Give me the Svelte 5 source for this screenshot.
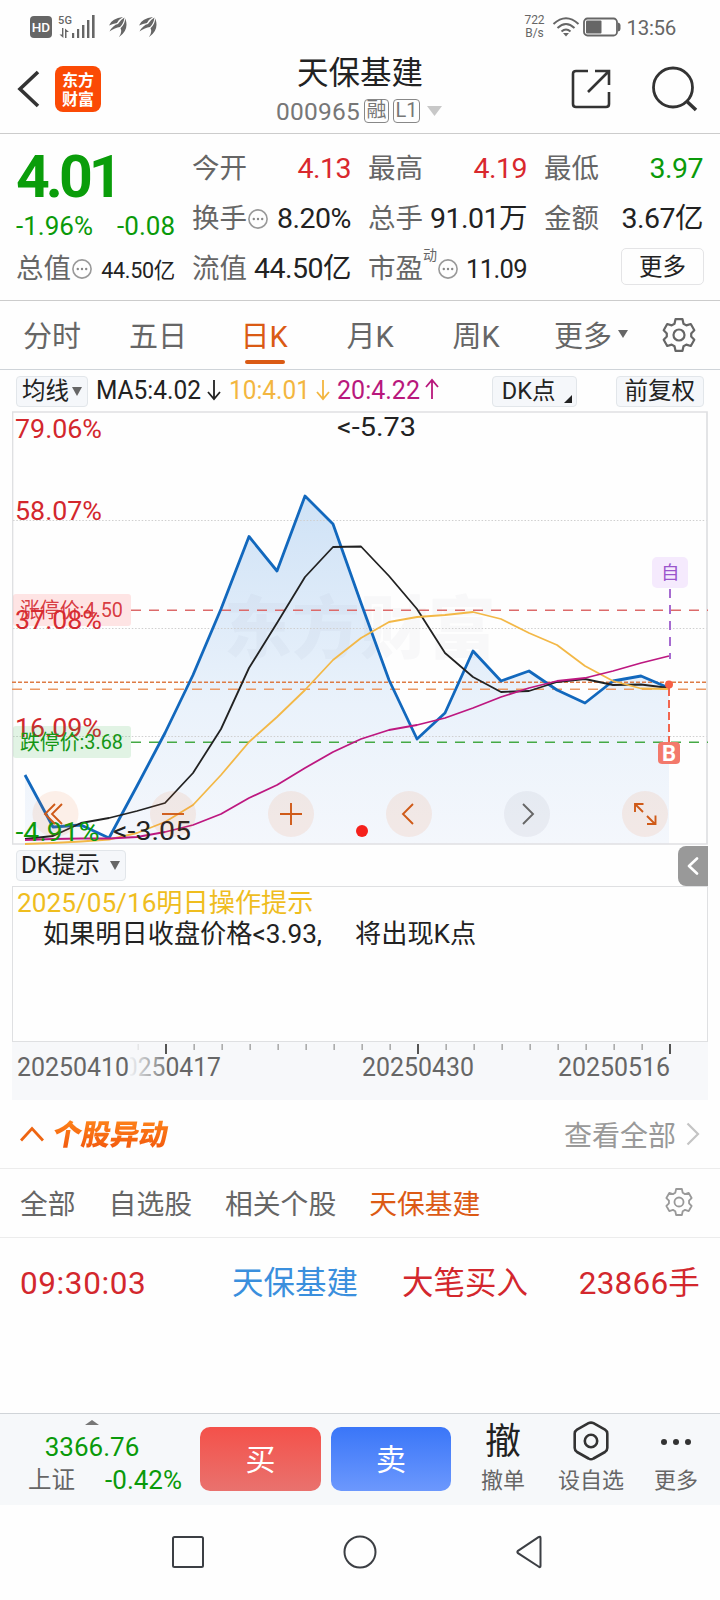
<script lang="ts">
	// Candles are spaced evenly along the x axis
	const x0 = 25;
	const step = 28;

	const price = [775, 827, 825, 838, 786, 733, 675, 609, 536.5, 571, 496, 524, 603, 680, 739, 713, 651, 681, 671, 690, 703, 681, 676, 688];
	const ma5 = [839, 836, 823, 818, 811, 803, 773, 729, 668, 623, 577, 547, 546.5, 576, 609, 653, 677, 692, 691, 682, 679, 685, 684.5, 688];
	const ma10 = [844, 843, 841.5, 839.5, 833, 822, 805, 775, 742, 717, 690, 660, 638, 622, 617, 615, 612, 619, 633, 645, 666, 681, 688.5, 689];
	const ma20 = [840, 839, 838.5, 838.5, 837, 832, 825, 814, 798, 785, 768, 752, 739, 730, 725, 718, 708, 697, 688, 681, 678, 671, 663, 656];

	const toPoints = (ys: number[]) => ys.map((y, i) => `${x0 + i * step},${y}`).join(' ');
	const area = `${x0},844 ${toPoints(price)} ${x0 + 23 * step},844`;

	const scale = [
		{ label: '79.06%', y: 438 },
		{ label: '58.07%', y: 520 },
		{ label: '37.08%', y: 629 },
		{ label: '16.09%', y: 737 }
	];

	const ticks = Array.from({ length: 20 }, (_, i) => 138 + i * 28);
	const majorTicks = [166, 418, 670];

	const tabs = ['分时', '五日', '日K', '月K', '周K'];
	const filters = ['全部', '自选股', '相关个股', '天保基建'];

	let activeTab = $state('日K');
	let activeFilter = $state('天保基建');
</script>

{#snippet more()}
	<svg class="info" width="20" height="20" viewBox="0 0 20 20">
		<circle cx="10" cy="10" r="9.1" fill="none" stroke="#999" stroke-width="1.6" />
		<circle cx="5.8" cy="10" r="1.2" fill="#888" />
		<circle cx="10" cy="10" r="1.2" fill="#888" />
		<circle cx="14.2" cy="10" r="1.2" fill="#888" />
	</svg>
{/snippet}

{#snippet gear(size: number, color: string, weight: number)}
	<svg width={size} height={size} viewBox="0 0 34 34" fill="none" stroke={color} stroke-width={weight} stroke-linejoin="round">
		<path d="M13.5 1.2 H20.5 L21.5 5.8 L24.3 7.4 L28.8 6 L32.3 12.2 L29.2 15.4 V18.6 L32.3 21.8 L28.8 28 L24.3 26.6 L21.5 28.2 L20.5 32.8 H13.5 L12.5 28.2 L9.7 26.6 L5.2 28 L1.7 21.8 L4.8 18.6 V15.4 L1.7 12.2 L5.2 6 L9.7 7.4 L12.5 5.8 Z" />
		<circle cx="17" cy="17" r="5.5" />
	</svg>
{/snippet}

{#snippet wing()}
	<svg width="18" height="20" viewBox="0 0 18 20" fill="#666">
		<path d="M0 8.5 Q3 1 14 0 Q9.5 2.5 8 6 Q4 6.5 0 8.5 Z" />
		<path d="M.5 14.5 Q4 8 9 7 Q11 3 15.5 .5 Q14.5 7 11 10 Q6 10.5 .5 14.5 Z" />
		<path d="M10 20 Q13.5 15 11.5 11.2 Q15.5 8 16.3 1.5 Q20.5 13 10 20 Z" />
	</svg>
{/snippet}

<div class="screen">
	<div class="status">
		<div class="status-left">
			<span class="hd">HD</span>
			<svg class="signal" width="38" height="26" viewBox="0 0 38 26" fill="#666">
				<text x="0" y="10" font-size="11" font-weight="500" textLength="14">5G</text>
				<path d="M4 14 h1.4 v10 L1.5 20.5 h2.5 Z M7 24 V14.5 L11 18 H8.5 V24 Z" />
				<rect x="14" y="19" width="2.2" height="5" />
				<rect x="19" y="15" width="2.2" height="9" />
				<rect x="24" y="11" width="2.4" height="13" />
				<rect x="29" y="6" width="2.4" height="18" />
				<rect x="34" y="1" width="2.6" height="23" />
			</svg>
			{@render wing()}
			<span class="wing-gap"></span>
			{@render wing()}
		</div>
		<div class="status-right">
			<span class="speed">722<br />B/s</span>
			<svg width="28" height="20" viewBox="0 0 28 20" fill="none" stroke="#666" stroke-width="2">
				<path d="M1.5 7 Q14 -4.5 26.5 7" />
				<path d="M5.5 11 Q14 3 22.5 11" />
				<path d="M9.5 14.5 Q14 10.5 18.5 14.5" />
				<path d="M11 16 H17 L14 19.5 Z" fill="#666" stroke="none" />
			</svg>
			<svg class="battery" width="38" height="20" viewBox="0 0 38 20">
				<rect x="1" y="1.5" width="33" height="17" rx="3.5" fill="none" stroke="#666" stroke-width="1.8" />
				<rect x="3" y="3.5" width="15.5" height="13" rx="1" fill="#666" />
				<path d="M35 5.5 Q37.5 6 37.5 8 V12 Q37.5 14 35 14.5 Z" fill="#666" />
			</svg>
			<span class="clock">13:56</span>
		</div>
	</div>

	<header>
		<div class="head-left">
			<svg width="24" height="38" viewBox="0 0 24 38" fill="none" stroke="#333" stroke-width="3.6">
				<path d="M21 2 L3 19 L21 36" />
			</svg>
			<div class="logo"><span>东方</span><span>财富</span></div>
		</div>
		<div class="title">
			<h1>天保基建</h1>
			<div class="code">
				<span>000965</span>
				<i class="tag">融</i>
				<i class="tag l1">L1</i>
				<svg width="15" height="10" viewBox="0 0 15 10"><path d="M0 0 H15 L7.5 10 Z" fill="#c8c8c8" /></svg>
			</div>
		</div>
		<div class="head-right">
			<svg width="40" height="40" viewBox="0 0 40 40" fill="none" stroke="#333" stroke-width="2.6">
				<path d="M17 2 H5 Q2 2 2 5 V35 Q2 38 5 38 H35 Q38 38 38 35 V23" />
				<path d="M24 2 H38 V16 M38 2 L17 23" />
			</svg>
			<svg width="46" height="46" viewBox="0 0 46 46" fill="none" stroke="#333" stroke-width="2.8">
				<circle cx="21" cy="21.5" r="19.5" />
				<path d="M34.5 35 L44 44" stroke-width="3.5" />
			</svg>
		</div>
	</header>

	<section class="quote">
		<div class="main-quote">
			<div class="price">4.01</div>
			<div class="change"><span>-1.96%</span><span>-0.08</span></div>
			<div class="cell small"><label>总值{@render more()}</label><b>44.50亿</b></div>
		</div>
		<div class="grid">
			<div class="cell"><label>今开</label><b class="up">4.13</b></div>
			<div class="cell"><label>最高</label><b class="up">4.19</b></div>
			<div class="cell"><label>最低</label><b class="down">3.97</b></div>
			<div class="cell"><label>换手{@render more()}</label><b>8.20%</b></div>
			<div class="cell"><label>总手</label><b>91.01万</b></div>
			<div class="cell"><label>金额</label><b>3.67亿</b></div>
			<div class="cell"><label>流值</label><b>44.50亿</b></div>
			<div class="cell pe"><label>市盈<sup>动</sup>{@render more()}</label><b>11.09</b></div>
			<div class="cell end"><button class="more-btn">更多</button></div>
		</div>
	</section>

	<nav class="tabs">
		{#each tabs as tab}
			<button class:active={tab === activeTab} onclick={() => (activeTab = tab)}>{tab}</button>
		{/each}
		<button class="tab-more">更多<svg width="10" height="8" viewBox="0 0 10 8"><path d="M0 0 H10 L5 8 Z" fill="#666" /></svg></button>
		{@render gear(34, '#666', 2.2)}
	</nav>

	<div class="ma-row">
		<button class="chip avg">均线<svg width="10" height="9" viewBox="0 0 10 9"><path d="M0 0 H10 L5 9 Z" fill="#666" /></svg></button>
		<svg class="ma-values" width="350" height="30" viewBox="96 376 350 30" font-size="25">
			<g fill="#222" stroke="none">
				<text x="96" y="399" textLength="105" lengthAdjust="spacingAndGlyphs">MA5:4.02</text>
				<path d="M214 380 V398 M208 392 L214 399 L220 392" fill="none" stroke="#222" stroke-width="1.8" />
			</g>
			<g fill="#f3b63f">
				<text x="229" y="399" textLength="81" lengthAdjust="spacingAndGlyphs">10:4.01</text>
				<path d="M323 380 V398 M317 392 L323 399 L329 392" fill="none" stroke="#f3b63f" stroke-width="1.8" />
			</g>
			<g fill="#b8187c">
				<text x="337" y="399" textLength="83" lengthAdjust="spacingAndGlyphs">20:4.22</text>
				<path d="M432 399 V381 M426 387 L432 380 L438 387" fill="none" stroke="#b8187c" stroke-width="1.8" />
			</g>
		</svg>
		<button class="chip dk">DK点<svg width="8" height="8" viewBox="0 0 8 8"><path d="M8 0 V8 H0 Z" fill="#222" /></svg></button>
		<button class="chip">前复权</button>
	</div>

	<svg class="chart" width="696" height="434" viewBox="12 411 696 434">
		<defs>
			<linearGradient id="fill" x1="0" y1="496" x2="0" y2="844" gradientUnits="userSpaceOnUse">
				<stop offset="0" stop-color="#cfe2f6" />
				<stop offset="0.6" stop-color="#eaf2fb" />
				<stop offset="1" stop-color="#f4f7fc" />
			</linearGradient>
		</defs>
		<polygon points={area} fill="url(#fill)" />
		<text class="watermark" x="224" y="653" textLength="272">东方财富</text>

		<g stroke="#cfcfcf" stroke-dasharray="1.5 1.8">
			<path d="M13 520.5 H707" />
			<path d="M13 628.5 H707" />
			<path d="M13 736.5 H707" />
		</g>
		<path d="M12.5 412 H707 V844 H12.5 Z" fill="none" stroke="#dfe0e2" stroke-width="1.7" />

		<path d="M131 610.3 H708" stroke="#dc6a6a" stroke-width="1.4" stroke-dasharray="10 8" />
		<path d="M131 742.3 H708" stroke="#45a945" stroke-width="1.4" stroke-dasharray="10 8" />
		<path d="M12 682.3 H707" stroke="#dd7b45" stroke-width="1.5" stroke-dasharray="4 2" />
		<path d="M12 689.3 H707" stroke="#eb9a66" stroke-width="1.5" stroke-dasharray="10 8" />

		<g fill="none" stroke-linejoin="round">
			<polyline points={toPoints(price)} stroke="#1268bd" stroke-width="2.8" />
			<polyline points={toPoints(ma5)} stroke="#222" stroke-width="1.8" />
			<polyline points={toPoints(ma10)} stroke="#f3b847" stroke-width="1.8" />
			<polyline points={toPoints(ma20)} stroke="#bd1880" stroke-width="1.8" />
		</g>

		<g font-size="26" fill="#d3272d">
			{#each scale as s}
				<text x="15" y={s.y} textLength="87" lengthAdjust="spacingAndGlyphs">{s.label}</text>
			{/each}
			<text x="15.5" y="841" fill="#0a9a0a" textLength="84" lengthAdjust="spacingAndGlyphs">-4.91%</text>
		</g>

		<rect x="13" y="594" width="118" height="32" rx="3" fill="#ff5050" fill-opacity="0.15" />
		<text x="20" y="617" font-size="21" fill="#d3272d" fill-opacity="0.9" textLength="103" lengthAdjust="spacingAndGlyphs">涨停价:4.50</text>
		<rect x="13" y="726" width="118" height="32" rx="3" fill="#22aa33" fill-opacity="0.13" />
		<text x="20" y="749" font-size="21" fill="#159615" textLength="103" lengthAdjust="spacingAndGlyphs">跌停价:3.68</text>

		<g font-size="26" fill="#222">
			<text x="337" y="436" textLength="79" lengthAdjust="spacingAndGlyphs">&lt;-5.73</text>
			<text x="113" y="840" textLength="78" lengthAdjust="spacingAndGlyphs">&lt;-3.05</text>
		</g>

		<path d="M670 589 V659" stroke="#a66bd0" stroke-width="2" stroke-dasharray="9 7" />
		<rect x="652" y="557" width="36" height="31" rx="5" fill="#f5eafd" />
		<text x="661" y="579" font-size="18.5" fill="#9a55cc">自</text>
		<path d="M669 688 V742" stroke="#f2664f" stroke-width="2" stroke-dasharray="8 4" />
		<circle cx="669" cy="684.5" r="4" fill="#f75f45" />
		<rect x="658" y="742" width="22" height="22" rx="4" fill="#f3796b" />
		<text x="669" y="761" font-size="22" font-weight="700" fill="#fff" text-anchor="middle">B</text>

		<!-- chart controls -->
		<g fill="#ea6a2a" fill-opacity="0.1">
			<circle cx="55.5" cy="814" r="23" />
			<circle cx="173" cy="814" r="23" />
			<circle cx="291" cy="814" r="23" />
			<circle cx="409" cy="814" r="23" />
			<circle cx="527" cy="814" r="23" fill="#889" />
			<circle cx="645" cy="814" r="23" />
		</g>
		<g fill="none" stroke="#cf5a18" stroke-width="1.9">
			<path d="M55 804 L45 814 L55 824 M62 804 L52 814 L62 824" />
			<path d="M162 814 H184" />
			<path d="M280 814 H302 M291 803 V825" />
			<path d="M413 804 L403 814 L413 824" />
			<path d="M523 804 L533 814 L523 824" stroke="#666" />
			<path d="M635 812 V804 H643.5 M635 804 L643 812 M647 824 H655.5 V815.5 M655 824 L647 816" />
		</g>
		<circle cx="362" cy="831" r="6" fill="#f5201b" />
	</svg>

	<div class="hint-bar">
		<button class="chip">DK提示<svg class="gap" width="10" height="9" viewBox="0 0 10 9"><path d="M0 0 H10 L5 9 Z" fill="#666" /></svg></button>
		<div class="drawer">
			<svg width="12" height="18" viewBox="0 0 12 18" fill="none" stroke="#fff" stroke-width="2.6" stroke-linecap="round" stroke-linejoin="round">
				<path d="M10 1.5 L2 9 L10 16.5" />
			</svg>
		</div>
	</div>

	<section class="hint">
		<p class="hint-title">2025/05/16明日操作提示</p>
		<p class="hint-text"><span>如果明日收盘价格&lt;3.93,</span><span>将出现K点</span></p>
	</section>

	<svg class="axis" width="696" height="58" viewBox="12 1042 696 58" font-size="25" fill="#666">
		<defs>
			<linearGradient id="fade" x1="128" x2="172" y1="0" y2="0" gradientUnits="userSpaceOnUse">
				<stop offset="0" stop-color="#f7f8fa" />
				<stop offset="1" stop-color="#f7f8fa" stop-opacity="0" />
			</linearGradient>
		</defs>
		<rect x="12" y="1042" width="696" height="58" fill="#f7f8fa" />
		{#each ticks as t}
			{#if majorTicks.includes(t)}
				<rect x={t - 1} y="1044" width="2" height="10" fill="#555" />
			{:else}
				<rect x={t - 0.5} y="1044" width="1.3" height="6" fill="#999" />
			{/if}
		{/each}
		<text x="110" y="1076" textLength="111" lengthAdjust="spacingAndGlyphs">20250417</text>
		<rect x="110" y="1044" width="20" height="40" fill="#f7f8fa" />
		<rect x="129" y="1044" width="36" height="40" fill="url(#fade)" />
		<text x="17" y="1076" textLength="112" lengthAdjust="spacingAndGlyphs">20250410</text>
		<text x="362" y="1076" textLength="112" lengthAdjust="spacingAndGlyphs">20250430</text>
		<text x="558" y="1076" textLength="112" lengthAdjust="spacingAndGlyphs">20250516</text>
	</svg>

	<section class="moves-head">
		<svg width="24" height="16" viewBox="0 0 24 16" fill="none" stroke="#ee6512" stroke-width="2.8">
			<path d="M1 14.5 L12 2.5 L23 14.5" />
		</svg>
		<h2>个股异动</h2>
		<span class="see-all">查看全部</span>
		<svg width="14" height="24" viewBox="0 0 14 24" fill="none" stroke="#c4c4c4" stroke-width="2.2">
			<path d="M1.5 1.5 L12 12 L1.5 22.5" />
		</svg>
	</section>

	<div class="filters">
		{#each filters as filter}
			<button class:active={filter === activeFilter} onclick={() => (activeFilter = filter)}>{filter}</button>
		{/each}
		{@render gear(28, '#999', 2.2)}
	</div>

	<div class="move">
		<span class="time">09:30:03</span>
		<span class="name">天保基建</span>
		<span class="kind">大笔买入</span>
		<span class="amount">23866手</span>
	</div>

	<footer>
		<div class="index">
			<svg width="14" height="5" viewBox="0 0 14 5"><path d="M0 5 L7 0 L14 5 Z" fill="#777" /></svg>
			<b>3366.76</b>
			<div><span>上证</span><em>-0.42%</em></div>
		</div>
		<button class="buy">买</button>
		<button class="sell">卖</button>
		<div class="actions">
			<div class="action"><span class="glyph">撤</span>撤单</div>
			<div class="action">
				<svg width="36" height="40" viewBox="0 0 36 40" fill="none" stroke="#333" stroke-width="2.6" stroke-linejoin="round">
					<path d="M15.5 2.2 Q18 1 20.5 2.2 L32 8.6 Q34.3 10 34.3 12.5 V27 Q34.3 29.5 32 31 L20.5 37.5 Q18 39 15.5 37.5 L4 31 Q1.7 29.5 1.7 27 V12.5 Q1.7 10 4 8.6 Z" />
					<circle cx="18" cy="20" r="6.2" />
				</svg>
				设自选
			</div>
			<div class="action">
				<svg width="32" height="40" viewBox="0 0 32 40" fill="#333">
					<circle cx="4" cy="21" r="3" />
					<circle cx="16" cy="21" r="3" />
					<circle cx="28" cy="21" r="3" />
				</svg>
				更多
			</div>
		</div>
	</footer>

	<div class="sysnav">
		<svg width="32" height="32" viewBox="0 0 32 32"><rect x="1" y="1" width="30" height="30" rx="1.5" /></svg>
		<svg width="34" height="34" viewBox="0 0 34 34"><circle cx="17" cy="17" r="15.5" /></svg>
		<svg width="26" height="34" viewBox="0 0 26 34"><path d="M24.5 3 V31 Q24.5 33 22.5 31.5 L2 18.2 Q0.8 17 2 15.8 L22.5 2.2 Q24.5 1 24.5 3 Z" /></svg>
	</div>
</div>

<style>
	:global(body) {
		background: #fefefe;
	}

	.screen {
		width: 720px;
		height: 1600px;
		overflow: hidden;
		display: flex;
		flex-direction: column;
		font-family: Roboto, 'Noto Sans CJK SC', sans-serif;
		color: #222;
		background: #fefefe;
	}

	.screen > * {
		flex-shrink: 0;
		box-sizing: border-box;
	}

	button {
		font: inherit;
		color: inherit;
		background: none;
		border: 0;
		padding: 0;
	}

	svg {
		display: block;
		flex-shrink: 0;
	}

	i, em, b {
		font-style: normal;
		font-weight: 400;
	}

	.status {
		height: 54px;
		display: flex;
		align-items: center;
		justify-content: space-between;
		padding: 0 44px 0 30px;
		color: #666;
	}

	.status-left, .status-right {
		display: flex;
		align-items: center;
	}

	.hd {
		width: 22px;
		height: 22px;
		border-radius: 4px;
		background: #666;
		color: #fff;
		font: 500 13.5px/22px Roboto, sans-serif;
		text-align: center;
	}

	.signal {
		margin: 0 13px 0 6px;
	}

	.wing-gap {
		width: 12px;
	}

	.speed {
		font-size: 12px;
		line-height: 13px;
		text-align: center;
		letter-spacing: -0.1px;
		margin-right: 8px;
	}

	.battery {
		margin: 0 5px 0 3px;
	}

	.clock {
		font-size: 20.5px;
		letter-spacing: -0.3px;
		line-height: 22px;
		padding-top: 2px;
	}

	header {
		height: 80px;
		border-bottom: 1px solid #ccc;
		display: flex;
		justify-content: space-between;
		position: relative;
		padding: 0 22px 0 17px;
	}

	.head-left {
		display: flex;
		align-items: center;
		gap: 14px;
		padding-bottom: 9px;
	}

	.logo {
		width: 46px;
		height: 46px;
		border-radius: 8px;
		background: #fb4a05;
		color: #fff;
		display: flex;
		flex-direction: column;
		align-items: center;
		justify-content: center;
		font: 700 16px/19px 'Noto Sans CJK SC', sans-serif;
	}

	.title {
		position: absolute;
		left: 0;
		right: 0;
		top: 2px;
		text-align: center;
	}

	h1 {
		margin: 0;
		font-size: 31.5px;
		font-weight: 400;
		line-height: 36px;
	}

	.code {
		display: flex;
		justify-content: center;
		align-items: center;
		gap: 4px;
		margin-top: 6px;
		height: 26px;
		color: #777;
		font-size: 24.5px;
		letter-spacing: 0.2px;
		padding-right: 2px;
	}

	.tag {
		width: 25px;
		height: 24px;
		box-sizing: border-box;
		border: 1px solid #888;
		border-radius: 4px;
		font-size: 20px;
		line-height: 21px;
		letter-spacing: 0;
	}

	.l1 {
		width: 27px;
	}

	.code svg {
		margin-left: 3px;
	}

	.head-right {
		display: flex;
		align-items: center;
		gap: 41px;
		padding-bottom: 9px;
	}

	.quote {
		height: 167px;
		border-bottom: 1px solid #ccc;
		padding: 9px 16px 0 16px;
		display: flex;
		gap: 18px;
	}

	.main-quote {
		width: 159px;
	}

	.price {
		height: 59px;
		font-size: 59px;
		line-height: 67px;
		font-weight: 700;
		letter-spacing: -4px;
		color: #0a9d0a;
	}

	.change {
		display: flex;
		justify-content: space-between;
		height: 41px;
		line-height: 49px;
		font-size: 26px;
		color: #0a9a0a;
	}

	.grid {
		display: grid;
		grid-template-columns: repeat(3, 158px);
		grid-auto-rows: 50px;
		column-gap: 18px;
	}

	.cell {
		display: flex;
		justify-content: space-between;
		align-items: baseline;
		height: 50px;
		line-height: 51px;
		white-space: nowrap;
	}

	.cell label {
		display: flex;
		align-items: center;
		font-size: 27.5px;
		color: #666;
	}

	.grid label {
		margin-left: -1px;
	}

	.cell b {
		font-size: 28.5px;
		letter-spacing: -0.5px;
	}

	.cell.small b {
		font-size: 21.5px;
		letter-spacing: -0.3px;
	}

	.cell.pe b {
		font-size: 25.5px;
		letter-spacing: -0.6px;
	}

	.cell .up {
		color: #d9282d;
	}

	.cell .down {
		color: #0a9a0a;
	}

	.info {
		margin-left: 1px;
	}

	sup {
		font-size: 14px;
		line-height: 14px;
		align-self: flex-start;
		margin-top: 5px;
	}

	.end {
		justify-content: flex-end;
		align-items: center;
	}

	.more-btn {
		width: 83px;
		height: 37px;
		margin: -3px -1px 0 0;
		border: 1.5px solid #e4e4e6;
		border-radius: 5px;
		font-size: 23.5px;
		line-height: 32px;
	}

	.tabs {
		height: 69px;
		border-bottom: 1px solid #cfd4d9;
		display: flex;
		align-items: center;
		padding: 0 24px 0 22px;
		font-size: 29px;
		color: #666;
	}

	.tabs button {
		height: 68px;
		padding-bottom: 2px;
		width: 60px;
		margin-right: 46px;
		white-space: nowrap;
		position: relative;
	}

	.tabs .active {
		color: #da5a14;
	}

	.tabs .active::after {
		content: '';
		position: absolute;
		left: 11px;
		bottom: 5px;
		width: 40px;
		height: 4px;
		border-radius: 2px;
		background: #da5a14;
	}

	.tabs .tab-more {
		width: 75px;
		margin: 0 auto 0 2px;
		display: flex;
		align-items: center;
		gap: 6px;
	}

	.ma-row {
		height: 41px;
		padding: 6px 16px 0;
		display: flex;
		align-items: flex-start;
	}

	.chip {
		box-sizing: border-box;
		height: 31px;
		border: 1.5px solid #e2e6ea;
		border-radius: 4px;
		background: #f5f7fa;
		font-size: 23.5px;
		line-height: 27px;
		padding: 0 8px;
		display: flex;
		align-items: center;
		white-space: nowrap;
	}

	.avg {
		padding: 0 5px;
		gap: 3px;
		margin-right: 8px;
	}

	.dk {
		margin-left: auto;
		margin-right: 39px;
		padding: 0 4px 0 9px;
		gap: 8px;
	}

	.dk svg {
		align-self: flex-end;
		margin-bottom: 3px;
	}

	.chart, .axis {
		margin-left: 12px;
	}

	.watermark {
		font-size: 68px;
		font-family: 'Noto Sans CJK SC', sans-serif;
		font-weight: 900;
		fill: #445;
		fill-opacity: 0.03;
	}

	.hint-bar {
		height: 42px;
		display: flex;
		justify-content: space-between;
		padding: 5px 12px 0 16px;
	}

	.hint-bar .chip {
		padding: 0 5px 0 4px;
		font-size: 24px;
		line-height: 29px;
	}

	.gap {
		margin-left: 10px;
	}

	.drawer {
		width: 30px;
		height: 40px;
		margin-top: -4px;
		border-radius: 8px 0 0 8px;
		background: #999;
		display: flex;
		align-items: center;
		justify-content: center;
	}

	.hint {
		height: 156px;
		margin-top: -1px;
		margin-left: 12px;
		width: 696px;
		border: 1.5px solid #dfe0e2;
		padding: 1px 4px 0;
		font-size: 26.2px;
	}

	.hint p {
		margin: 0;
		line-height: 31px;
		white-space: nowrap;
	}

	.hint-title {
		color: #efbd1e;
	}

	.hint-text {
		padding-left: 26px;
		display: flex;
		gap: 33px;
	}

	.moves-head {
		height: 69px;
		border-bottom: 1px solid #ececec;
		display: flex;
		align-items: center;
		padding: 0 20px;
	}

	h2 {
		margin: 2px auto 0 9px;
		font-size: 29px;
		font-weight: 900;
		letter-spacing: -0.3px;
		line-height: 40px;
		transform: skewX(-10deg);
		background: linear-gradient(#ff8a1c, #f0500a);
		background-clip: text;
		color: transparent;
	}

	.see-all {
		font-size: 28px;
		color: #999;
		margin-right: 10px;
	}

	.filters {
		height: 69px;
		border-bottom: 1px solid #ececec;
		display: flex;
		align-items: center;
		gap: 33px;
		padding: 0 27px 2px 20px;
		font-size: 27.8px;
		color: #666;
	}

	.filters .active {
		color: #dc5a14;
		margin-right: auto;
	}

	.move {
		height: 175px;
		padding: 25px 20px 0;
		display: flex;
		font-size: 31.5px;
		line-height: 42px;
		color: #d3272d;
	}

	.time {
		width: 212px;
		letter-spacing: 0.6px;
	}

	.name {
		width: 170px;
		color: #3a8fdd;
	}

	.amount {
		margin-left: auto;
		letter-spacing: 0.2px;
	}

	footer {
		height: 92px;
		border-top: 1px solid #d0d4d8;
		background: #f6f8fa;
		display: flex;
		align-items: center;
	}

	.index {
		width: 200px;
		height: 100%;
		display: flex;
		flex-direction: column;
		align-items: center;
		padding: 6px 16px 0 0;
		box-sizing: border-box;
		color: #0a9a0a;
		font-size: 26px;
		line-height: 34px;
	}

	.index b {
		margin-top: 5px;
	}

	.index div {
		align-self: stretch;
		display: flex;
		justify-content: space-between;
		align-items: center;
		margin-left: 28px;
		width: 154px;
		line-height: 32px;
	}

	.index span {
		color: #666;
		font-size: 23.5px;
	}

	.buy, .sell {
		width: 121px;
		height: 64px;
		padding-bottom: 4px;
		margin-top: -2px;
		border-radius: 10px;
		color: #fff;
		font-size: 30px;
	}

	.buy {
		background: linear-gradient(#f4514a, #e9726e);
		margin-right: 10px;
	}

	.sell {
		width: 120px;
		background: linear-gradient(#3a76f8, #6c98fd);
	}

	.actions {
		display: grid;
		grid-template-columns: 50px 66px 44px;
		column-gap: 30px;
		margin-left: 27px;
	}

	.action {
		display: flex;
		flex-direction: column;
		align-items: center;
		white-space: nowrap;
		font-size: 22px;
		line-height: 40px;
		color: #666;
		margin-top: 3px;
	}

	.glyph {
		height: 40px;
		font-size: 36px;
		line-height: 42px;
		color: #222;
	}

	.sysnav {
		height: 95px;
		display: flex;
		align-items: center;
		justify-content: center;
		gap: 139px;
		padding-right: 6px;
		padding-bottom: 2px;
	}

	.sysnav svg {
		fill: none;
		stroke: #3c3f44;
		stroke-width: 2;
	}
</style>
